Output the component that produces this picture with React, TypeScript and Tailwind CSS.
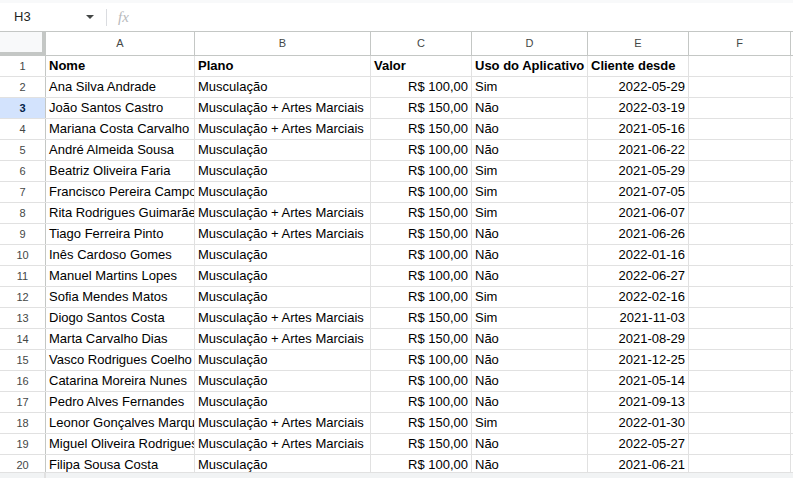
import React from 'react';

type Row = [string, string, string, string, string];

const MAM = 'Musculação + Artes Marciais';
const M = 'Musculação';

const rows: Row[] = [
  ['Ana Silva Andrade', M, 'R$ 100,00', 'Sim', '2022-05-29'],
  ['João Santos Castro', MAM, 'R$ 150,00', 'Não', '2022-03-19'],
  ['Mariana Costa Carvalho', MAM, 'R$ 150,00', 'Não', '2021-05-16'],
  ['André Almeida Sousa', M, 'R$ 100,00', 'Não', '2021-06-22'],
  ['Beatriz Oliveira Faria', M, 'R$ 100,00', 'Sim', '2021-05-29'],
  ['Francisco Pereira Campos', M, 'R$ 100,00', 'Sim', '2021-07-05'],
  ['Rita Rodrigues Guimarães', MAM, 'R$ 150,00', 'Sim', '2021-06-07'],
  ['Tiago Ferreira Pinto', MAM, 'R$ 150,00', 'Não', '2021-06-26'],
  ['Inês Cardoso Gomes', M, 'R$ 100,00', 'Não', '2022-01-16'],
  ['Manuel Martins Lopes', M, 'R$ 100,00', 'Não', '2022-06-27'],
  ['Sofia Mendes Matos', M, 'R$ 100,00', 'Sim', '2022-02-16'],
  ['Diogo Santos Costa', MAM, 'R$ 150,00', 'Sim', '2021-11-03'],
  ['Marta Carvalho Dias', MAM, 'R$ 150,00', 'Não', '2021-08-29'],
  ['Vasco Rodrigues Coelho', M, 'R$ 100,00', 'Não', '2021-12-25'],
  ['Catarina Moreira Nunes', M, 'R$ 100,00', 'Não', '2021-05-14'],
  ['Pedro Alves Fernandes', M, 'R$ 100,00', 'Não', '2021-09-13'],
  ['Leonor Gonçalves Marques', MAM, 'R$ 150,00', 'Sim', '2022-01-30'],
  ['Miguel Oliveira Rodrigues', MAM, 'R$ 150,00', 'Não', '2022-05-27'],
  ['Filipa Sousa Costa', M, 'R$ 100,00', 'Não', '2021-06-21'],
];

const font = { fontFamily: '"Liberation Sans", Arial, sans-serif' };

function Cell({ w, right, bold, children }: { w: string; right?: boolean; bold?: boolean; children?: React.ReactNode }) {
  return (
    <div
      className={`${w} shrink-0 h-full flex items-center overflow-hidden whitespace-nowrap border-r border-[#e1e1e1] px-[3px] text-[13px] text-black ${right ? 'justify-end' : ''} ${bold ? 'font-bold' : ''}`}
    >
      {children}
    </div>
  );
}

export default function App() {
  return (
    <div className="w-[793px] h-[478px] overflow-hidden bg-white flex flex-col" style={font}>
      {/* formula bar */}
      <div className="h-[32px] shrink-0 border-b border-[#c4c7c5] border-t-[3px] border-t-[#f8f9fa] flex items-center">
        <div className="w-[100px] flex items-center pl-[14px] pr-[6px]">
          <span className="text-[13px] text-[#1f1f1f] flex-1">H3</span>
          <svg width="8" height="4" viewBox="0 0 8 4">
            <path d="M0 0h8L4 4z" fill="#444746" />
          </svg>
        </div>
        <div className="w-px h-[17px] bg-[#dadce0] ml-[6px]" />
        <span className="ml-[11px] text-[15px] italic text-[#b7b9bc]" style={{ fontFamily: '"Liberation Serif", serif' }}>fx</span>
      </div>

      {/* grid */}
      <div className="flex-1 overflow-hidden">
        {/* column header */}
        <div className="h-[24px] flex">
          <div className="w-[46px] shrink-0 h-full bg-[#f8f9fa] border-r-4 border-b-4 border-[#c4c7c5]" />
          {[
            ['A', 'w-[149px]'],
            ['B', 'w-[176px]'],
            ['C', 'w-[101px]'],
            ['D', 'w-[116px]'],
            ['E', 'w-[101px]'],
            ['F', 'w-[102px]'],
            ['', 'w-[20px]'],
          ].map(([l, w]) => (
            <div
              key={l + w}
              className={`${w} shrink-0 h-full flex items-center justify-center border-r border-b border-[#c4c7c5] text-[11px] text-[#444746]`}
            >
              {l}
            </div>
          ))}
        </div>

        {[['Nome', 'Plano', 'Valor', 'Uso do Aplicativo', 'Cliente desde'] as Row, ...rows].map((r, i) => {
          const hdr = i === 0;
          const sel = i === 2;
          return (
            <div key={i} className="h-[21px] flex border-b border-[#e1e1e1]">
              <div
                className={`w-[46px] shrink-0 h-full flex items-center justify-center border-r border-[#c4c7c5] text-[11px] ${sel ? 'bg-[#d3e3fd] text-[#041e49] font-bold' : 'text-[#444746]'}`}
              >
                {i + 1}
              </div>
              <Cell w="w-[149px]" bold={hdr}>{r[0]}</Cell>
              <Cell w="w-[176px]" bold={hdr}>{r[1]}</Cell>
              <Cell w="w-[101px]" bold={hdr} right={!hdr}>{r[2]}</Cell>
              <Cell w="w-[116px]" bold={hdr}>{r[3]}</Cell>
              <Cell w="w-[101px]" bold={hdr} right={!hdr}>{r[4]}</Cell>
              <Cell w="w-[102px]" />
              <Cell w="w-[20px]" />
            </div>
          );
        })}
      </div>

      {/* bottom scroll strip */}
      <div className="h-[6px] shrink-0 flex bg-[#f1f3f4] border-t border-[#e1e1e1]">
        <div className="w-[46px] border-r-2 border-[#e1e1e1]" />
      </div>
    </div>
  );
}
